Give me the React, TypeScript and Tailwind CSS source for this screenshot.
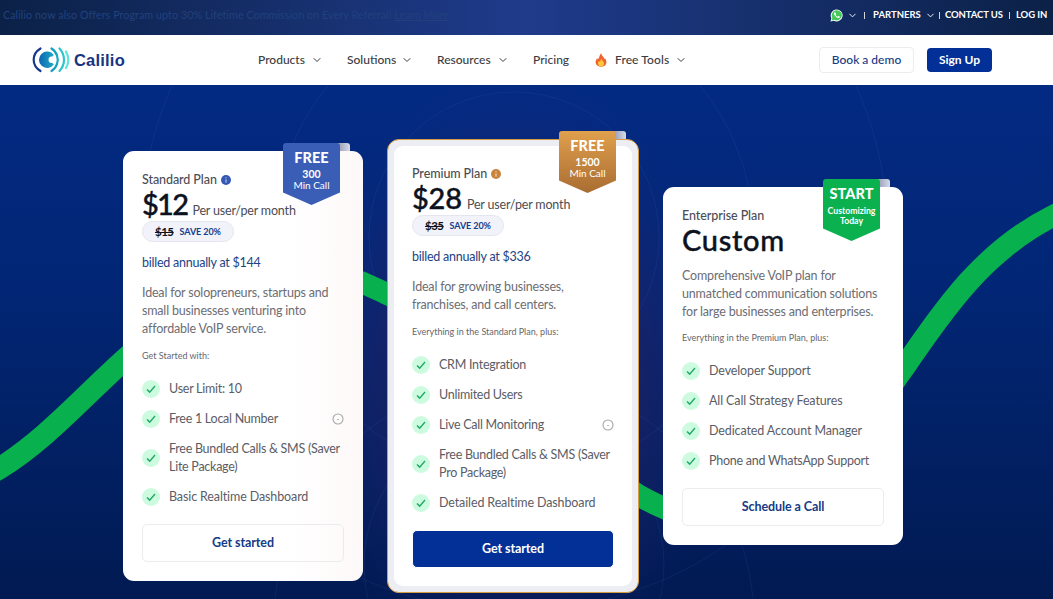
import { ReactNode } from "react";
import { ChevronDown } from "lucide-react";
import clsx from "clsx";

type Plan = {
  name: string;
  price: string;
  priceClass: string;
  info?: string;
  oldPrice?: string;
  billed?: string;
  description: string[];
  intro: string;
  features: { lines: string[]; hint?: boolean; tight?: boolean }[];
  button: string;
};

const standard: Plan = {
  name: "Standard Plan",
  price: "$12",
  priceClass: "tracking-[-1.700px]",
  info: "#3558b4",
  oldPrice: "$15",
  billed: "billed annually at $144",
  description: [
    "Ideal for solopreneurs, startups and",
    "small businesses venturing into",
    "affordable VoIP service.",
  ],
  intro: "Get Started with:",
  features: [
    { lines: ["User Limit: 10"], tight: true },
    { lines: ["Free 1 Local Number"], hint: true, tight: true },
    { lines: ["Free Bundled Calls & SMS (Saver", "Lite Package)"], tight: true },
    { lines: ["Basic Realtime Dashboard"] },
  ],
  button: "Get started",
};

const premium: Plan = {
  name: "Premium Plan",
  price: "$28",
  priceClass: "tracking-[-0.200px]",
  info: "#c9853c",
  oldPrice: "$35",
  billed: "billed annually at $336",
  description: ["Ideal for growing businesses,", "franchises, and call centers."],
  intro: "Everything in the Standard Plan, plus:",
  features: [
    { lines: ["CRM Integration"], tight: true },
    { lines: ["Unlimited Users"], tight: true },
    { lines: ["Live Call Monitoring"], hint: true, tight: true },
    { lines: ["Free Bundled Calls & SMS (Saver", "Pro Package)"], tight: true },
    { lines: ["Detailed Realtime Dashboard"] },
  ],
  button: "Get started",
};

const enterprise: Plan = {
  name: "Enterprise Plan",
  price: "Custom",
  priceClass: "tracking-[0.700px]",
  description: [
    "Comprehensive VoIP plan for",
    "unmatched communication solutions",
    "for large businesses and enterprises.",
  ],
  intro: "Everything in the Premium Plan, plus:",
  features: [
    { lines: ["Developer Support"] },
    { lines: ["All Call Strategy Features"] },
    { lines: ["Dedicated Account Manager"] },
    { lines: ["Phone and WhatsApp Support"], tight: true },
  ],
  button: "Schedule a Call",
};

function Logo() {
  return (
    <svg width="38" height="28" viewBox="0 0 38 28" fill="none">
      <defs>
        <linearGradient id="logo" x1="6" y1="0" x2="24" y2="0" gradientUnits="userSpaceOnUse">
          <stop stopColor="#0c62b0" />
          <stop offset="1" stopColor="#1fb4ca" />
        </linearGradient>
      </defs>
      <g strokeWidth="2.2" strokeLinecap="round">
        <path d="M8.500 2.500C-.6 8-.6 19.500 8.500 25" stroke="#153a8c" />
        <path d="M19.500 2.500C22 4 24 6.500 25 9.500M25 18C24 21 22 23.500 19.500 25" stroke="#16a0c0" />
        <path d="M25 9.500C26 12.300 26 15.200 25 18" stroke="#16a9c4" />
        <path d="M27.500 2.500C33.500 9 33.500 18.500 27.500 25" stroke="#2cc4cd" />
        <path d="M34 5.500C37 11 37 17 34 22" stroke="#5fe3dc" />
      </g>
      <path
        d="M21.800 9A8.200 8.200 0 1 0 21.800 18.500L20 16.800C18.200 17.500 16.500 15.800 16.500 13.800S18.200 10 20 10.700Z"
        fill="url(#logo)"
      />
    </svg>
  );
}

function WhatsApp() {
  return (
    <svg width="13" height="13" viewBox="0 0 24 24">
      <path d="M1 23l1.6-6A11 11 0 1 1 7 21.5Z" fill="#fff" />
      <path d="M3 21l1.3-4.6A9.4 9.4 0 1 1 7.6 19.8Z" fill="#45c95b" />
      <path
        d="M8 6.500c-3 3 4.500 12 9.500 9.500.8-.6.9-1.500.6-2l-2.500-1.200-1.300 1.400c-2-.8-3.200-2.100-4-3.800l1-1.200L10.200 6.500Z"
        fill="#fff"
      />
    </svg>
  );
}

function Flame() {
  return (
    <svg width="12" height="14" viewBox="0 0 12 14">
      <path
        d="M6.200.3C6.500 3 9.300 4 9.300 6.200L10 5.300C11.200 7 11.800 8.700 11.200 10.500 10.500 12.700 8.500 13.700 6 13.700S1.200 12.500.7 10.200C.3 8 1.200 6.500 2.200 5L2.800 6.500C4.800 5 4 2.200 6.200.3Z"
        fill="#f0642b"
      />
      <path
        d="M6.200 5.500C6.700 7.500 9 8.300 9 10.500 9 12.700 7.500 13.500 6 13.500S3 12.500 3 10.500C3 9.300 3.500 8.500 4 7.900L4.700 8.800C5.800 8.200 5.500 6.800 6.200 5.500Z"
        fill="#ffc83d"
      />
    </svg>
  );
}

function TopBar() {
  return (
    <div className="flex h-[35px] items-center justify-between bg-[linear-gradient(90deg,#0b2147_0%,#1f3b8b_50%,#0b2147_100%)] pr-[5px] pl-[3px] pb-[5px] text-white">
      <p className="text-[10.700px] tracking-[0.080px] whitespace-nowrap text-[#21417d]">
        Calilio now also Offers Program upto 30% Lifetime Commission on Every Referral!{" "}
        <span className="underline">Learn More</span>
      </p>
      <div className="flex items-center text-[9.500px] font-bold whitespace-nowrap">
        <WhatsApp />
        <ChevronDown size={11} className="ml-[4px]" />
        <span className="ml-[6px] h-[7px] w-px bg-white/80" />
        <span className="ml-[8px] w-[47px]">PARTNERS</span>
        <ChevronDown size={11} className="ml-[5px]" />
        <span className="ml-[3px] h-[7px] w-px bg-white/80" />
        <span className="ml-[5px] w-[58px] tracking-[-0.100px]">CONTACT US</span>
        <span className="ml-[6px] h-[7px] w-px bg-white/80" />
        <span className="ml-[6px] w-[32px] tracking-[-0.100px]">LOG IN</span>
      </div>
    </div>
  );
}

function NavItem({
  label,
  className,
  icon,
  arrow = true,
}: {
  label: string;
  className: string;
  icon?: ReactNode;
  arrow?: boolean;
}) {
  return (
    <div className="flex items-center">
      {icon}
      <span className={clsx("whitespace-nowrap", className)}>{label}</span>
      {arrow && <ChevronDown size={12} className="ml-[6px] -mr-px" />}
    </div>
  );
}

function Navbar() {
  return (
    <nav className="flex h-[50px] items-center bg-white pl-8 text-[12px] font-medium text-[#3b3c42]">
      <div className="flex w-[226px] items-center gap-[4px]">
        <Logo />
        <span className="font-['Liberation_Sans',sans-serif] text-[16.500px] font-bold tracking-[0.200px] text-[#173581]">
          Calilio
        </span>
      </div>
      <div className="flex w-[561px] gap-[25px]">
        <NavItem label="Products" className="w-[47px]" />
        <NavItem label="Solutions" className="w-[48px]" />
        <NavItem label="Resources" className="w-[54px]" />
        <NavItem label="Pricing" className="w-[37px]" arrow={false} />
        <NavItem label="Free Tools" className="ml-[8px] w-[54px] tracking-[0.100px]" icon={<Flame />} />
      </div>
      <button className="h-[26px] w-[95px] rounded-[4px] border border-[#ececf0] text-[12px] text-[#153b85]">
        Book a demo
      </button>
      <button className="ml-[13px] h-[24px] w-[65px] rounded-[4px] bg-[#033097] text-[12px] font-bold text-white">
        Sign Up
      </button>
    </nav>
  );
}

function Backdrop() {
  return (
    <svg className="absolute inset-0" width="1053" height="514" viewBox="0 0 1053 514" fill="none">
      <defs>
        <radialGradient id="glow">
          <stop stopColor="#3a1a55" stopOpacity="0.65" />
          <stop offset="0.5" stopColor="#331e5b" stopOpacity="0.5" />
          <stop offset="1" stopColor="#1a2a78" stopOpacity="0" />
        </radialGradient>
      </defs>
      <ellipse cx="515" cy="290" rx="215" ry="300" fill="url(#glow)" />
      <g stroke="#4a6cc0" strokeOpacity="0.13">
        <circle cx="514" cy="152" r="145" />
        <circle cx="514" cy="152" r="240" />
        <circle cx="514" cy="152" r="374" />
        <circle cx="514" cy="480" r="150" />
        <circle cx="514" cy="535" r="240" />
      </g>
      <path
        d="M-20 395L0 383C45 355 80 315 123 276C200 205 270 160 363 198C395 212 400 215 420 230C500 290 560 360 638 410C690 440 770 460 830 390C860 355 880 315 903 284C945 222 985 165 1053 131L1075 120"
        stroke="#08b14d"
        strokeWidth="22"
      />
    </svg>
  );
}

function Ribbon({
  color,
  title,
  className,
  children,
}: {
  color: string;
  title: string;
  className: string;
  children: ReactNode;
}) {
  return (
    <div className={clsx("absolute h-[63px] w-[67px]", className)}>
      <div className="absolute top-0 right-0 h-[8px] w-[14px] rounded-tr-[3px] bg-linear-to-r from-[#8f94ad] to-[#d7daea]" />
      <div
        className={clsx(
          "absolute top-0 left-0 h-[62px] w-[57px] rounded-t-[3px] text-center text-white [clip-path:polygon(0_0,100%_0,100%_80%,50%_100%,0_80%)]",
          color
        )}
      >
        <p className="pt-[7px] text-[14.500px] leading-[16px] font-black">{title}</p>
        {children}
      </div>
    </div>
  );
}

function CheckMark() {
  return (
    <svg width="18" height="18" viewBox="0 0 18 18" fill="none" className="shrink-0">
      <circle cx="9" cy="9" r="9" fill="#cdfbdf" />
      <path d="M5 9.400l2.700 2.700L13 6" stroke="#24a869" strokeWidth="1.400" />
    </svg>
  );
}

function PlanBody({ plan, primary }: { plan: Plan; primary?: boolean }) {
  return (
    <div className="whitespace-nowrap">
      <div className="flex h-[18px] gap-[4px] text-[12.500px] leading-[20px] font-medium tracking-[-0.080px] text-[#4b4d55]">
        {plan.name}
        {plan.info && (
          <svg width="10" height="10" viewBox="0 0 10 10" className="mt-[5px]">
            <circle cx="5" cy="5" r="5" fill={plan.info} />
            <path d="M5 4.400v3.200M5 2.300v1" stroke="#fff" strokeOpacity="0.800" />
          </svg>
        )}
      </div>
      <div className="flex h-[31px] items-baseline">
        <span
          className={clsx(
            "text-[29px] leading-[31px] font-medium text-[#0d1220] [-webkit-text-stroke:0.4px_#0d1220]",
            plan.priceClass
          )}
        >
          {plan.price}
        </span>
        {plan.billed && (
          <span className="ml-[5px] text-[12.500px] tracking-[-0.170px] text-[#4b4d55]">
            Per user/per month
          </span>
        )}
      </div>
      {plan.billed && (
        <>
          <div className="mt-[2px] flex h-[21px] w-fit items-center gap-[6px] rounded-full border border-[#e4e5ef] bg-[#f2f3fa] px-3 font-bold">
            <s className="text-[11.500px] tracking-[-0.500px] text-[#10131c]">{plan.oldPrice}</s>
            <span className="text-[9px] tracking-[-0.080px] text-[#14408e]">SAVE 20%</span>
          </div>
          <p className="mt-[12px] text-[12.500px] leading-[18px] tracking-[-0.240px] text-[#1d4384]">
            {plan.billed}
          </p>
        </>
      )}
      <div className="mt-[12px] text-[12.500px] leading-[18px] tracking-[-0.180px] text-[#6c6d74]">
        {plan.description.map((line) => (
          <p key={line}>{line}</p>
        ))}
      </div>
      <p
        className={clsx(
          "text-[9px] leading-[14px] text-[#66676d]",
          plan.billed ? "mt-[11px]" : "mt-[10px]"
        )}
      >
        {plan.intro}
      </p>
      <ul className="mt-[17px] flex flex-col gap-[12px] text-[12.500px] leading-[18px] text-[#5b5d66]">
        {plan.features.map((feature) => (
          <li key={feature.lines[0]} className="flex items-center gap-[9px]">
            <CheckMark />
            <div className={feature.tight ? "tracking-[-0.260px]" : "tracking-[-0.120px]"}>
              {feature.lines.map((line) => (
                <p key={line}>{line}</p>
              ))}
            </div>
            {feature.hint && (
              <svg width="12" height="12" viewBox="0 0 12 12" fill="none" className="ml-auto">
                <circle cx="6" cy="6" r="5" stroke="#a5a6ab" strokeWidth="1.100" />
                <path d="M5 6.500h2" stroke="#b9babf" />
              </svg>
            )}
          </li>
        ))}
      </ul>
      <button
        className={clsx(
          "mt-[18px] h-[38px] w-full rounded-[5px] border text-[12.500px] font-bold tracking-[-0.080px]",
          primary ? "border-white bg-[#033097] text-white" : "border-[#ececef] text-[#153b85]"
        )}
      >
        {plan.button}
      </button>
    </div>
  );
}

export default function App() {
  return (
    <div className="h-[599px] w-[1053px] overflow-hidden font-[Lato,sans-serif]">
      <TopBar />
      <Navbar />
      <main className="relative h-[514px] bg-[linear-gradient(180deg,#032a83_0%,#022675_40%,#011a52_100%)]">
        <Backdrop />
        <div className="relative flex items-start pl-[123px]">
          <section className="relative mt-[66px] h-[430px] w-[240px] rounded-[11px] bg-linear-to-r from-white from-70% to-[#fdf8f8] px-[19px] pt-[19px]">
            <Ribbon color="bg-[#3a5eb5]" title="FREE" className="top-[-8px] left-[160px]">
              <p className="mt-[3px] text-[10.500px] leading-[11px] font-bold">300</p>
              <p className="text-[10px] leading-[10px]">Min Call</p>
            </Ribbon>
            <PlanBody plan={standard} />
          </section>

          <section className="relative ml-6 mt-[54px] h-[454px] w-[252px] rounded-[12px] border border-[#d79b42] bg-[#edeef4] p-[6px]">
            <Ribbon
              color="bg-linear-to-b from-[#e0a04d] to-[#a96d32]"
              title="FREE"
              className="top-[-9px] left-[171px]"
            >
              <p className="mt-[3px] text-[10.500px] leading-[11px] font-bold">1500</p>
              <p className="text-[10px] leading-[10px]">Min Call</p>
            </Ribbon>
            <div className="h-[440px] rounded-[9px] bg-white px-[18px] pt-[18px]">
              <PlanBody plan={premium} primary />
            </div>
          </section>

          <section className="relative ml-6 mt-[102px] h-[358px] w-[240px] rounded-[11px] bg-white px-[19px] pt-[19px]">
            <Ribbon color="bg-[#0bb14e]" title="START" className="top-[-8px] left-[160px]">
              <p className="mt-[4px] text-[8.700px] leading-[10px] font-bold">Customizing</p>
              <p className="text-[8.700px] leading-[10px] font-bold">Today</p>
            </Ribbon>
            <PlanBody plan={enterprise} />
          </section>
        </div>
      </main>
    </div>
  );
}
